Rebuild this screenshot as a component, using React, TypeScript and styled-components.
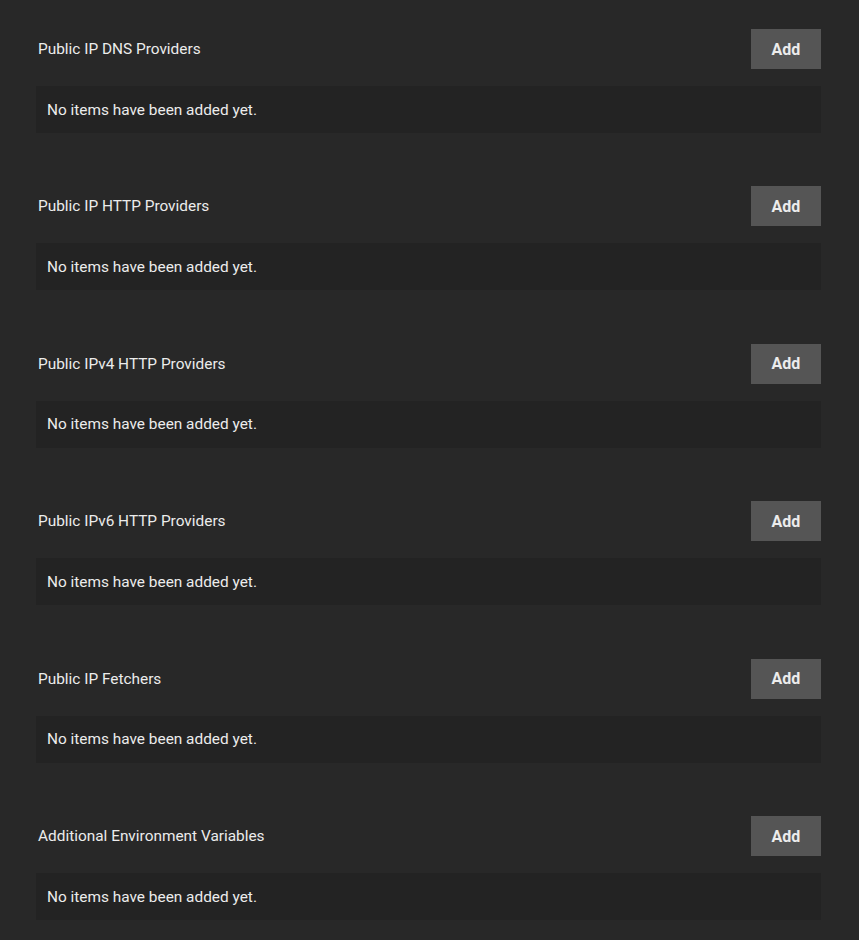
import React, { FC } from 'react';
import styled, { createGlobalStyle } from 'styled-components';

const GlobalStyle = createGlobalStyle`
  html, body {
    margin: 0;
    padding: 0;
    background: #282828;
  }
  body {
    font-family: Roboto, 'Liberation Sans', sans-serif;
    color: #e6e6e6;
  }
`;

const lists = [
  'Public IP DNS Providers',
  'Public IP HTTP Providers',
  'Public IPv4 HTTP Providers',
  'Public IPv6 HTTP Providers',
  'Public IP Fetchers',
  'Additional Environment Variables',
];

const ListSection: FC<{ title: string }> = ({ title }) => (
  <Section>
    <Header>
      <Title>{title}</Title>
      <AddButton type="button">Add</AddButton>
    </Header>
    <EmptyBox>No items have been added yet.</EmptyBox>
  </Section>
);

const App: FC = () => (
  <>
    <GlobalStyle />
    <Page>
      {lists.map((title) => (
        <ListSection key={title} title={title} />
      ))}
    </Page>
  </>
);

const Page = styled.div`
  display: flex;
  flex-direction: column;
  gap: 53.45px;
  padding: 29px 38px 20px 36px;
`;

const Section = styled.div`
  display: flex;
  flex-direction: column;
  gap: 17px;
`;

const Header = styled.div`
  display: flex;
  align-items: center;
  justify-content: space-between;
  height: 40px;
`;

const Title = styled.div`
  padding-left: 2px;
  font-size: 15.4px;
  font-weight: 400;
  color: #ececec;
`;

const AddButton = styled.button`
  width: 70px;
  height: 40px;
  border: none;
  border-radius: 0;
  background: #555555;
  color: #ececec;
  font-family: Roboto, 'Liberation Sans', sans-serif;
  font-size: 16px;
  font-weight: 700;
  cursor: pointer;
`;

const EmptyBox = styled.div`
  display: flex;
  align-items: center;
  height: 47px;
  padding-left: 11px;
  background: #232323;
  font-size: 15.4px;
  font-weight: 400;
  color: #ececec;
`;

export default App;
